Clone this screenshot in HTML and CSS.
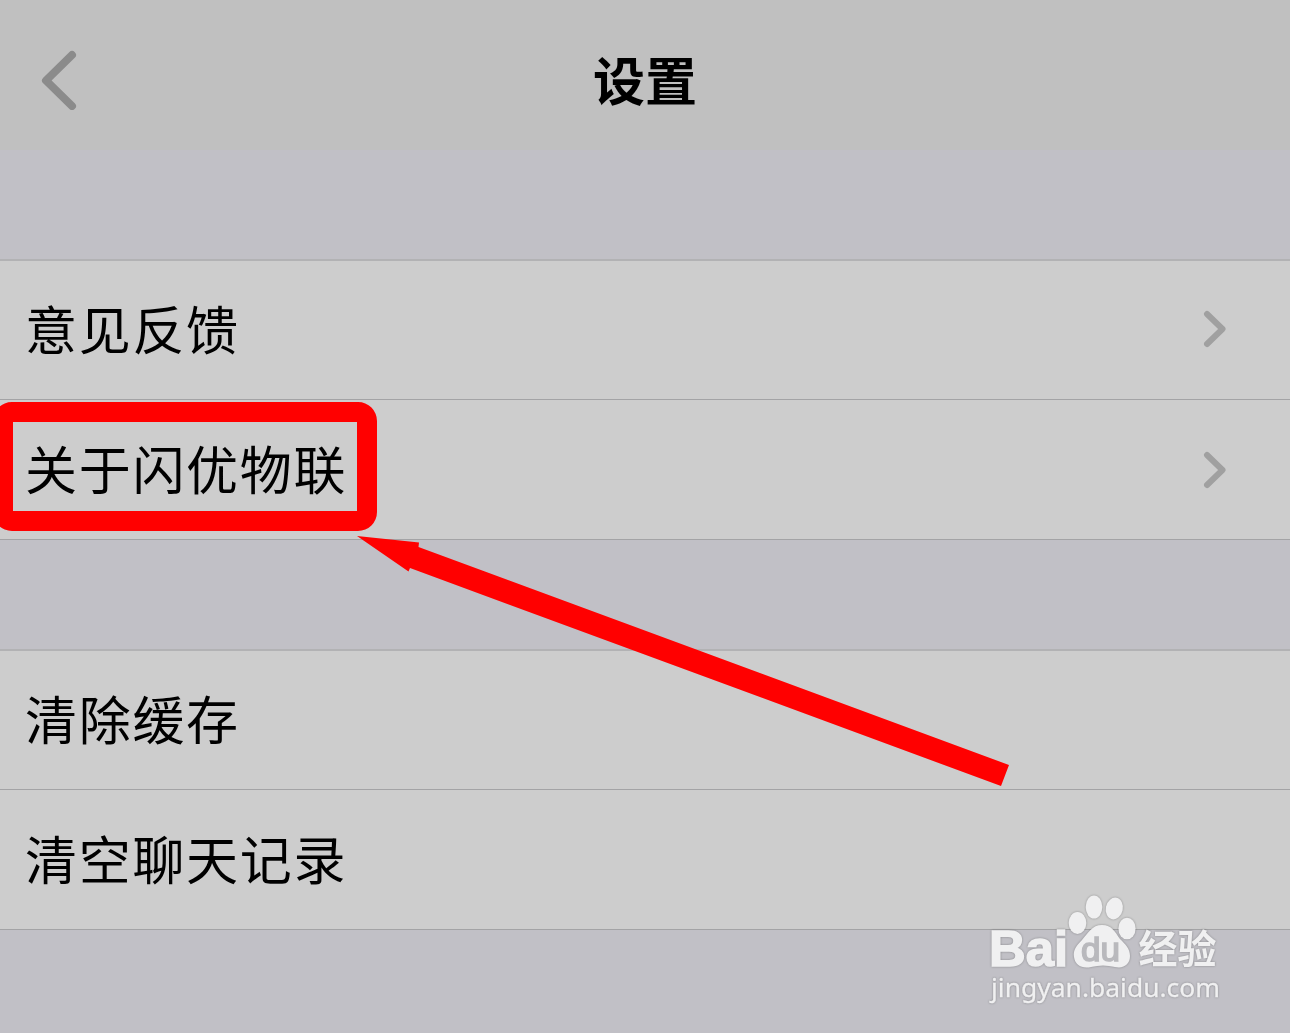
FILE: index.html
```html
<!DOCTYPE html>
<html lang="zh-CN">
<head>
    <meta charset="UTF-8">
    <meta name="viewport" content="width=device-width, initial-scale=1.0">
    <title>设置</title>
    <link rel="stylesheet" href="styles.css">
</head>
<body>
    <div class="page">
        <header class="navbar">
            <svg class="back" width="36" height="60" viewBox="0 0 36 60">
                <path d="M31 5 L5 30.5 L31 56"/>
            </svg>
            <h1>设置</h1>
        </header>

        <main>
            <ul class="group">
                <li class="row">
                    <span>意见反馈</span>
                    <svg class="chevron" width="24" height="38" viewBox="0 0 24 38">
                        <path d="M4 4 L19.5 19 L4 34"/>
                    </svg>
                </li>
                <li class="row">
                    <span>关于闪优物联</span>
                    <svg class="chevron" width="24" height="38" viewBox="0 0 24 38">
                        <path d="M4 4 L19.5 19 L4 34"/>
                    </svg>
                </li>
            </ul>

            <ul class="group">
                <li class="row"><span>清除缓存</span></li>
                <li class="row"><span>清空聊天记录</span></li>
            </ul>
        </main>

        <!-- highlight box and arrow -->
        <div class="highlight"></div>
        <svg class="arrow" width="660" height="260" viewBox="0 0 660 260">
            <polygon points="0,0 62,6.5 61.5,11 652,229 644,250 53,32 51.5,35.5"/>
        </svg>

        <svg class="watermark" width="250" height="125" viewBox="0 0 250 125">
            <text class="bai" x="9" y="75.5" textLength="79" lengthAdjust="spacingAndGlyphs">Bai</text>
            <g class="paw">
                <ellipse cx="97.5" cy="33" rx="8.8" ry="11"/>
                <ellipse cx="114" cy="17" rx="8.3" ry="11.5"/>
                <ellipse cx="134.3" cy="18.5" rx="8.5" ry="11" transform="rotate(12 134.3 18.5)"/>
                <ellipse cx="147" cy="38.5" rx="8.6" ry="10.8"/>
                <path d="M122 35 C112 35 108 43 102 50 C96 56 93 60 94 67 C95 75 102 79 111 77 C119 75 127 75 135 77 C144 79 150 74 150 66 C150 58 145 54 140 49 C135 42 132 35 122 35 Z"/>
            </g>
            <text class="du" x="101" y="71" textLength="39" lengthAdjust="spacingAndGlyphs">du</text>
            <text class="jingyan" x="158.5" y="73" textLength="78" lengthAdjust="spacingAndGlyphs">经验</text>
            <text class="site" x="11" y="106.5" textLength="229" lengthAdjust="spacingAndGlyphs">jingyan.baidu.com</text>
        </svg>
    </div>
</body>
</html>
```

FILE: styles.css
```css
* {
    box-sizing: border-box;
}

body {
    margin: 0;
    background-color: #c1c0c6;
    color: #000;
    font-family: "Noto Sans CJK SC", sans-serif;
}

.page {
    position: relative;
    height: 1033px;
    overflow: hidden;
}

.navbar {
    display: grid;
    grid-template-columns: 120px 1fr 120px;
    align-items: center;
    height: 150px;
    background-color: #c0c0c0;
}

.back {
    margin: 9px 0 0 41px;
}

.back path {
    fill: none;
    stroke: #8b8b8b;
    stroke-width: 8;
    stroke-linecap: round;
    stroke-linejoin: round;
}

h1 {
    margin: 8px 0 0;
    font-size: 52px;
    line-height: 76px;
    font-weight: 700;
    text-align: center;
}

.group {
    margin: 109px 0 0;
    padding: 0;
    list-style: none;
    border-top: 2px solid #b2b2b4;
    background-color: #cdcdcd;
}

.row {
    display: flex;
    align-items: center;
    justify-content: space-between;
    height: 139px;
    padding: 0 63px 6px 25px;
    border-bottom: 1px solid #a3a3a5;
    font-size: 52px;
    letter-spacing: 1.7px;
}

.row:last-child {
    height: 140px;
    padding-bottom: 4px;
}

.chevron {
    margin-top: 4px;
}

.chevron path {
    fill: none;
    stroke: #a0a0a0;
    stroke-width: 6;
    stroke-linecap: round;
    stroke-linejoin: round;
}

.highlight {
    position: absolute;
    left: -7px;
    top: 402px;
    width: 384px;
    height: 129px;
    border: 20px solid #f00;
    border-radius: 19px;
}

.arrow {
    position: absolute;
    left: 357px;
    top: 536px;
    fill: #f00;
}

.watermark {
    position: absolute;
    left: 980px;
    top: 890px;
    fill: #f0f0f1;
    filter: drop-shadow(0 0 1px rgba(0, 0, 0, 0.3));
}

.bai {
    font: bold 50px "Liberation Sans", sans-serif;
    stroke: #f0f0f1;
    stroke-width: 1.5;
}

.du {
    font: 33px "Liberation Sans", sans-serif;
    fill: #b9b9bd;
    stroke: #b9b9bd;
    stroke-width: 1.5;
}

.jingyan {
    font: 700 39px "Noto Sans CJK SC", sans-serif;
}

.site {
    font: 26px "Noto Sans", sans-serif;
    stroke: #f0f0f1;
    stroke-width: 0.3;
}
```
